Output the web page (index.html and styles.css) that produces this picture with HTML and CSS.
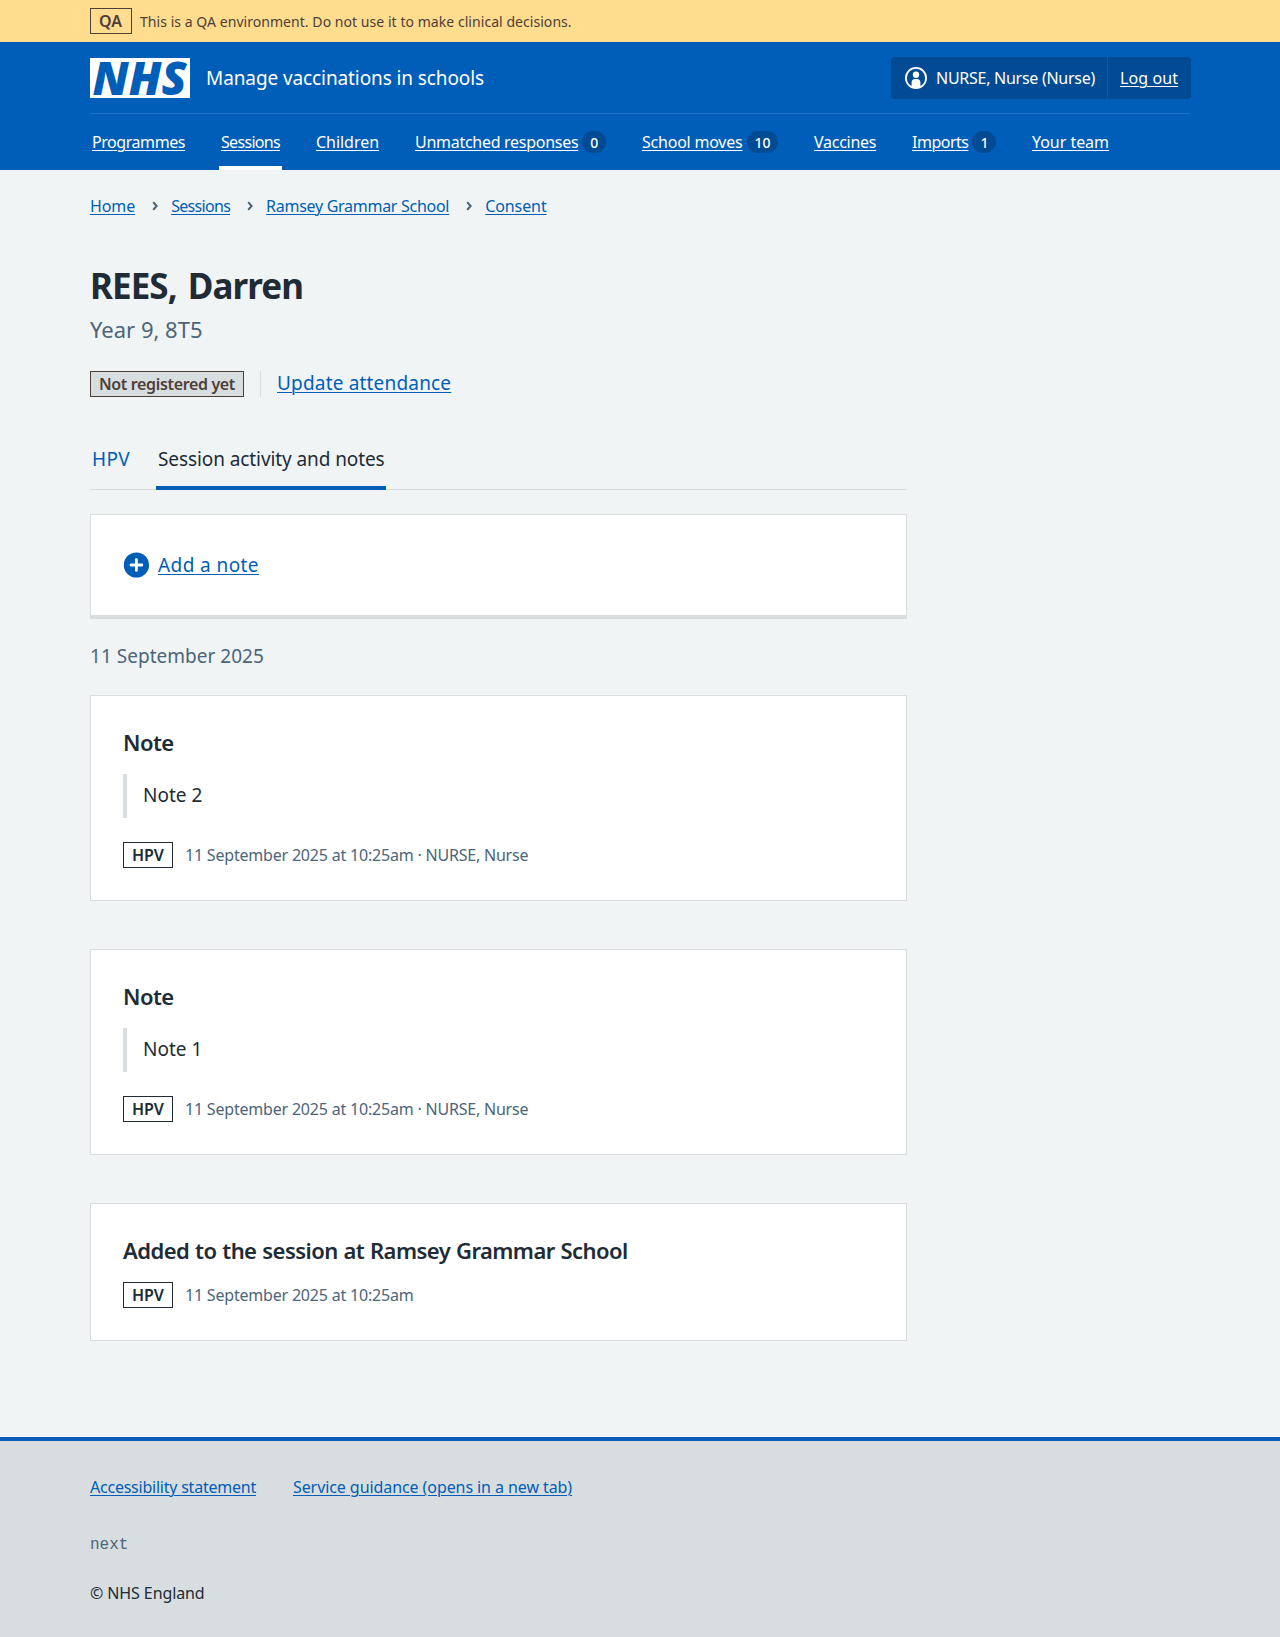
FILE: index.html
```html
<!DOCTYPE html>
<html lang="en">
<head>
<meta charset="utf-8">
<title>REES, Darren – Manage vaccinations in schools</title>
<link rel="stylesheet" href="styles.css">
</head>
<body>
<div class="banner">
  <div class="container banner__inner">
    <strong class="tag tag--banner">QA</strong>
    <span class="banner__text">This is a QA environment. Do not use it to make clinical decisions.</span>
  </div>
</div>
<header class="header">
  <div class="container">
    <div class="header__top">
      <svg class="logo" width="100" height="40" viewBox="0 0 100 40" role="img" aria-label="NHS">
        <rect width="100" height="40" fill="#fff"/>
        <text class="logo__text" x="2.500" y="36.500" textLength="94" lengthAdjust="spacingAndGlyphs">NHS</text>
      </svg>
      <span class="header__service">Manage vaccinations in schools</span>
      <div class="account">
        <span class="account__user">
          <svg width="24" height="24" viewBox="0 0 24 24" aria-hidden="true">
            <circle cx="12" cy="12" r="10.1" fill="none" stroke="#fff" stroke-width="1.8"/>
            <circle cx="12" cy="8.700" r="3.200" fill="#fff"/>
            <path fill="#fff" d="M7.600 20.800v-4.300a3.500 3.500 0 0 1 3.500-3.500h1.800a3.500 3.500 0 0 1 3.500 3.500v4.300A10 10 0 0 1 12 22a10 10 0 0 1-4.400-1.200z"/>
          </svg>
          <span class="account__name">NURSE, Nurse (Nurse)</span>
        </span>
        <a class="account__logout" href="#">Log out</a>
      </div>
    </div>
    <nav class="nav">
      <a class="nav__link nav__link--programmes" href="#"><span>Programmes</span></a>
      <a class="nav__link nav__link--sessions nav__link--current" href="#"><span>Sessions</span></a>
      <a class="nav__link nav__link--children" href="#"><span>Children</span></a>
      <a class="nav__link nav__link--unmatched" href="#"><span>Unmatched responses</span><b class="badge">0</b></a>
      <a class="nav__link nav__link--moves" href="#"><span>School moves</span><b class="badge">10</b></a>
      <a class="nav__link nav__link--vaccines" href="#"><span>Vaccines</span></a>
      <a class="nav__link nav__link--imports" href="#"><span>Imports</span><b class="badge">1</b></a>
      <a class="nav__link nav__link--team" href="#"><span>Your team</span></a>
    </nav>
  </div>
</header>
<main class="container main">
  <nav class="breadcrumb">
    <a href="#">Home</a>
    <svg class="chevron" viewBox="0 0 6 10"><path d="M1.200 1.200 4.600 5 1.200 8.800"/></svg>
    <a class="breadcrumb__sessions" href="#">Sessions</a>
    <svg class="chevron" viewBox="0 0 6 10"><path d="M1.200 1.200 4.600 5 1.200 8.800"/></svg>
    <a class="breadcrumb__school" href="#">Ramsey Grammar School</a>
    <svg class="chevron" viewBox="0 0 6 10"><path d="M1.200 1.200 4.600 5 1.200 8.800"/></svg>
    <a href="#">Consent</a>
  </nav>
  <h1 class="title">REES, Darren</h1>
  <p class="caption">Year 9, 8T5</p>
  <div class="status">
    <strong class="tag tag--grey">Not registered yet</strong>
    <a class="status__action" href="#">Update attendance</a>
  </div>
  <div class="column">
    <nav class="tabs">
      <a class="tabs__link tabs__link--hpv" href="#">HPV</a>
      <a class="tabs__link tabs__link--current" href="#">Session activity and notes</a>
    </nav>
    <div class="card card--action">
      <svg width="26" height="26" viewBox="0 0 26 26" aria-hidden="true">
        <circle cx="13.400" cy="13" r="12.600" fill="#005eb8"/>
        <path d="M13.400 7.600v10.800M8 13h10.800" stroke="#fff" stroke-width="2.800" stroke-linecap="round"/>
      </svg>
      <a class="card__add" href="#">Add a note</a>
    </div>
    <h2 class="date">11 September 2025</h2>
    <div class="card">
      <h3 class="card__heading">Note</h3>
      <blockquote class="card__quote">Note 2</blockquote>
      <p class="card__meta"><strong class="tag">HPV</strong><span>11 September 2025 at 10:25am · NURSE, Nurse</span></p>
    </div>
    <div class="card">
      <h3 class="card__heading">Note</h3>
      <blockquote class="card__quote">Note 1</blockquote>
      <p class="card__meta"><strong class="tag">HPV</strong><span>11 September 2025 at 10:25am · NURSE, Nurse</span></p>
    </div>
    <div class="card">
      <h3 class="card__heading">Added to the session at Ramsey Grammar School</h3>
      <p class="card__meta"><strong class="tag">HPV</strong><span>11 September 2025 at 10:25am</span></p>
    </div>
  </div>
</main>
<footer class="footer">
  <div class="container">
    <div class="footer__links">
      <a class="footer__accessibility" href="#">Accessibility statement</a>
      <a class="footer__guidance" href="#">Service guidance (opens in a new tab)</a>
    </div>
    <p class="footer__version">next</p>
    <p class="footer__copyright">© NHS England</p>
  </div>
</footer>
</body>
</html>
```
FILE: styles.css
```css
* { box-sizing: border-box; }

body {
  margin: 0;
  background: #f0f4f5;
  color: #212b36;
  font: 400 16px/24px "Noto Sans", "Open Sans", sans-serif;
}

h1, h2, h3, p, blockquote { margin: 0; }

a {
  color: #005eb8;
  text-decoration: underline;
  text-decoration-thickness: 1px;
  text-underline-offset: 2px;
}

svg { display: block; flex: none; }

.container { width: 1100px; margin: 0 auto; }

.tag {
  display: inline-block;
  height: 26px;
  padding: 0 8px;
  border: 1px solid #212b36;
  background: #fff;
  color: #212b36;
  font-weight: 600;
  line-height: 24px;
}

.banner { background: #ffdc8e; color: #4d4038; }
.banner__inner { display: flex; align-items: center; gap: 8px; height: 42px; }
.banner__text { padding-top: 1px; font-size: 14px; line-height: 24px; letter-spacing: .05px; }
.tag--banner { width: 42px; border-color: #4d4038; background: none; color: #4d4038; }

.header { background: #005eb8; color: #fff; }
.header a { color: #fff; }
.header__top { display: flex; align-items: center; height: 72px; border-bottom: 1px solid #2071c4; }
.logo { overflow: visible; }
.logo__text {
  fill: #005eb8;
  font: italic 800 46px "Open Sans", "Noto Sans", sans-serif;
}
.header__service { margin-left: 16px; font-size: 19px; letter-spacing: -.1px; }
.account {
  display: flex;
  height: 42px;
  margin-left: auto;
  margin-right: -1px;
  border-radius: 4px;
  background: #004b93;
}
.account__user {
  display: flex;
  align-items: center;
  gap: 8px;
  width: 217px;
  padding-left: 13px;
  border-right: 1px solid #005eb8;
}
.account__name { letter-spacing: -.27px; white-space: nowrap; }
.account__logout { width: 83px; padding-left: 12px; line-height: 42px; letter-spacing: .1px; }

.nav { display: flex; gap: 32px; height: 56px; }
.nav__link {
  display: flex;
  align-items: center;
  flex: none;
  padding: 4px 2px 0;
  border-bottom: 4px solid transparent;
  text-decoration: none;
  white-space: nowrap;
}
.nav__link span { text-decoration: underline; text-decoration-thickness: 1px; text-underline-offset: 2px; }
.nav__link--current { border-bottom-color: #fff; }
.nav__link--programmes { width: 97px; letter-spacing: -.44px; }
.nav__link--sessions { width: 63px; letter-spacing: -.69px; }
.nav__link--children { width: 67px; letter-spacing: -.04px; }
.nav__link--unmatched { width: 195px; letter-spacing: -.28px; }
.nav__link--moves { width: 140px; letter-spacing: -.22px; }
.nav__link--vaccines { width: 66px; letter-spacing: -.27px; }
.nav__link--imports { width: 88px; letter-spacing: -.5px; }
.nav__link--team { letter-spacing: -.04px; }
.badge {
  height: 22px;
  margin-left: 4px;
  padding: 0 8px;
  border-radius: 11px;
  background: #004b93;
  font-size: 14px;
  font-weight: 500;
  line-height: 23px;
  letter-spacing: -.1px;
}

.main { padding: 24px 0 96px; }

.breadcrumb { display: flex; align-items: center; height: 24px; letter-spacing: -.1px; }
.breadcrumb__sessions { letter-spacing: -.69px; }
.breadcrumb__school { letter-spacing: -.28px; }
.chevron {
  width: 6px;
  height: 10px;
  margin: 0 13px 0 17px;
  fill: none;
  stroke: #4c6272;
  stroke-width: 2;
}

.title {
  margin-top: 46px;
  font-size: 35px;
  font-weight: 700;
  line-height: 44px;
  letter-spacing: -.95px;
  word-spacing: 3px;
}
.caption { margin-top: 5px; color: #4c657a; font-size: 22px; line-height: 32px; }
.status { display: flex; gap: 16px; height: 26px; margin-top: 26px; }
.tag--grey { width: 154px; border-color: #4d4038; background: #d8dde0; color: #4d4038; letter-spacing: -.35px; white-space: nowrap; }
.status__action {
  padding-left: 16px;
  border-left: 1px solid #d8dde0;
  font-size: 19px;
  line-height: 24px;
  letter-spacing: .18px;
}

.column { width: 817px; }
.tabs { display: flex; gap: 24px; margin-top: 47px; box-shadow: inset 0 -1px #d8dde0; }
.tabs__link {
  padding: 1px 2px 12px;
  border-bottom: 4px solid transparent;
  font-size: 19px;
  line-height: 29px;
  letter-spacing: -.09px;
  text-decoration: none;
}
.tabs__link--hpv { width: 42px; letter-spacing: .3px; }
.tabs__link--current { width: 230px; color: #212b36; border-bottom-color: #005eb8; white-space: nowrap; }

.card { padding: 32px; border: 1px solid #d8dde0; background: #fff; }
.card + .card { margin-top: 48px; }
.card--action {
  display: flex;
  align-items: center;
  gap: 9px;
  height: 105px;
  margin-top: 24px;
  border-bottom-width: 4px;
}
.card__add { font-size: 19px; letter-spacing: .41px; }
.date { margin: 23px 0 25px; color: #4c657a; font-size: 19px; font-weight: 400; line-height: 28px; letter-spacing: .02px; }
.card__heading { font-size: 22px; font-weight: 600; line-height: 29px; letter-spacing: -.56px; word-spacing: .7px; }
.card__quote {
  height: 44px;
  margin-top: 17px;
  padding-left: 16px;
  border-left: 4px solid #d8dde0;
  font-size: 19px;
  line-height: 43px;
}
.card__quote + .card__meta { margin-top: 24px; }
.card__meta { display: flex; gap: 12px; margin-top: 17px; color: #4c657a; line-height: 26px; letter-spacing: -.2px; }
.card__meta .tag { width: 50px; letter-spacing: -.1px; }

.footer { padding: 34px 0 32px; border-top: 4px solid #005eb8; background: #d8dde0; }
.footer__links { display: flex; gap: 37px; }
.footer__accessibility { letter-spacing: -.23px; }
.footer__guidance { letter-spacing: -.08px; }
.footer__version { margin-top: 34px; color: #4c657a; font-family: "Liberation Mono", monospace; }
.footer__copyright { margin-top: 24px; letter-spacing: -.1px; }
```
